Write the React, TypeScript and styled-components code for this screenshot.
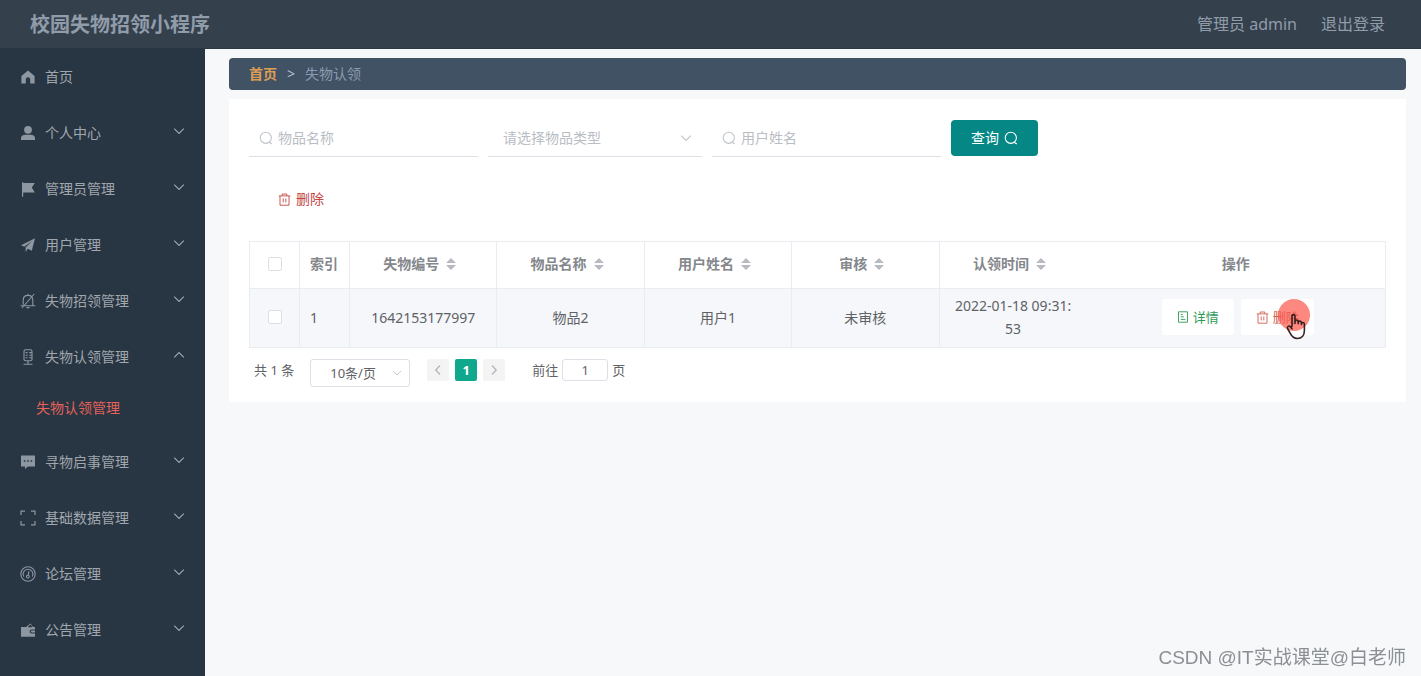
import React from 'react';
import styled, { createGlobalStyle, css } from 'styled-components';

const GlobalStyle = createGlobalStyle`
  *, *::before, *::after { box-sizing: border-box; }
  body {
    margin: 0;
    background: #f6f8fa;
    color: #606266;
    font-family: "Noto Sans", "Noto Sans CJK SC", sans-serif;
    font-size: 14px;
    line-height: 20px;
  }
  button, input, select { font: inherit; color: inherit; margin: 0; }
  a { color: inherit; text-decoration: none; }
`;

const Page = styled.div`
  display: flex;
  flex-direction: column;
  min-height: 100vh;
`;

const Header = styled.header`
  display: flex;
  align-items: center;
  justify-content: space-between;
  height: 49px;
  padding: 0 36px 0 30px;
  background: #35404d;
  border-bottom: 1px solid #2d3743;
  color: #909ca9;
`;

const Title = styled.h1`
  margin: 0;
  padding-top: 2px;
  font-size: 20px;
  line-height: 28px;
  font-weight: 700;
`;

const Account = styled.div`
  display: flex;
  gap: 24px;
  font-size: 16px;
  line-height: 24px;
`;

const Body = styled.div`
  display: flex;
  flex: 1;
`;

const Sidebar = styled.nav`
  flex: 0 0 205px;
  background: #283542;
  color: #a0a7ae;
`;

const MenuList = styled.ul`
  margin: 0;
  padding: 0;
  list-style: none;
`;

const MenuLink = styled.a`
  display: flex;
  align-items: center;
  gap: 9px;
  height: 56px;
  padding: 0 20px;
`;

const MenuIcon = styled.svg`
  flex: none;
  width: 16px;
  height: 16px;
  color: #8d97a2;
`;

const MenuLabel = styled.span`
  flex: 1;
`;

const MenuArrow = styled.svg<{ $open?: boolean }>`
  width: 12px;
  height: 12px;
  margin-bottom: 4px;
  ${(p) => p.$open && css`transform: rotate(180deg);`}
`;

const SubLink = styled.a`
  display: flex;
  align-items: center;
  height: 49px;
  padding: 0 36px 4px;
  color: #e4625a;
`;

const Main = styled.main`
  flex: 1;
  min-width: 0;
  padding: 9px 15px 20px 24px;
`;

const Breadcrumb = styled.nav`
  display: flex;
  align-items: center;
  gap: 10px;
  height: 32px;
  padding: 0 20px;
  border-radius: 4px;
  background: #425265;
  color: #8b9bb0;
`;

const HomeCrumb = styled.a`
  color: #dd9f55;
  font-weight: 700;
`;

const Separator = styled.span`
  color: #b4bfcb;
`;

const Card = styled.section`
  margin-top: 9px;
  padding: 21px 20px 15px;
  background: #fff;
`;

const SearchForm = styled.form`
  display: flex;
  gap: 10px;
`;

const Field = styled.label<{ $width: number }>`
  display: flex;
  align-items: center;
  gap: 5px;
  width: ${(p) => p.$width}px;
  height: 37px;
  padding: 0 10px;
  border-bottom: 1px solid #dcdfe6;
  color: #c0c4cc;
`;

const TextInput = styled.input`
  flex: 1;
  min-width: 0;
  padding: 0;
  border: 0;
  outline: 0;
  background: none;
  color: #606266;
  &::placeholder { color: #b9bdc4; opacity: 1; }
`;

const TypeSelect = styled.select`
  flex: 1;
  min-width: 0;
  padding: 0 0 0 5px;
  border: 0;
  outline: 0;
  appearance: none;
  background: none;
  color: #b9bdc4;
`;

const Glyph = styled.svg<{ $size: number }>`
  flex: none;
  width: ${(p) => p.$size}px;
  height: ${(p) => p.$size}px;
`;

const QueryButton = styled.button`
  display: flex;
  align-items: center;
  gap: 5px;
  height: 36px;
  padding: 0 20px;
  border: 0;
  border-radius: 4px;
  background: #048785;
  color: #fff;
`;

const Toolbar = styled.div`
  display: flex;
  padding: 24px 9px;
`;

const DeleteButton = styled.button`
  display: flex;
  align-items: center;
  gap: 5px;
  height: 36px;
  padding: 0 20px;
  border: 0;
  background: #fff;
  color: #c4453f;
`;

const Table = styled.table`
  width: 100%;
  table-layout: fixed;
  border-collapse: collapse;
  border: 1px solid #e9ecf1;
`;

const cell = css<{ $align?: string; $plain?: boolean }>`
  padding: 0 ${(p) => (p.$align ? 10 : 12)}px 2px;
  text-align: ${(p) => p.$align ?? 'center'};
  border: 0 solid #e9ecf1;
  border-right-width: ${(p) => (p.$plain ? 0 : 1)}px;
  border-bottom-width: 1px;
`;

const Th = styled.th<{ $align?: string; $plain?: boolean }>`
  ${cell}
  height: 47px;
  color: #84878c;
  font-weight: 700;
`;

const Td = styled.td<{ $align?: string; $plain?: boolean }>`
  ${cell}
  height: 59px;
  line-height: 23px;
  background: #f5f7fa;
  word-break: break-all;
`;

const Col = styled.col<{ $width?: number }>`
  width: ${(p) => (p.$width ? `${p.$width}px` : 'auto')};
`;

const SortHead = styled.span`
  display: inline-flex;
  align-items: center;
`;

const SortIcon = styled.svg`
  width: 24px;
  height: 14px;
  color: #b7bac0;
`;

const Check = styled.input`
  display: block;
  width: 14px;
  height: 14px;
  margin: 0 auto;
  appearance: none;
  border: 1px solid #dcdfe6;
  border-radius: 2px;
  background: #fff;
`;

const Actions = styled.div`
  display: flex;
  justify-content: center;
  gap: 7px;
  padding-left: 4px;
`;

const ActionButton = styled.button<{ $color: string }>`
  position: relative;
  display: flex;
  align-items: center;
  gap: 4px;
  height: 36px;
  padding: 0 15px;
  border: 0;
  border-radius: 2px;
  background: #fff;
  color: ${(p) => p.$color};
  font-size: 13px;
`;

const Pointer = styled.svg`
  position: absolute;
  top: -1px;
  right: 2px;
  width: 36px;
  height: 44px;
`;

const Pagination = styled.div`
  display: flex;
  align-items: flex-start;
  padding: 11px 5px 0;
  font-size: 13px;
  line-height: 22px;
`;

const SizeBox = styled.label`
  display: flex;
  align-items: center;
  width: 100px;
  height: 28px;
  margin: 0 17px 0 16px;
  padding: 0 7px 0 19px;
  border: 1px solid #dcdfe6;
  border-radius: 3px;
  color: #c0c4cc;
`;

const SizeSelect = styled.select`
  flex: 1;
  min-width: 0;
  padding: 0;
  border: 0;
  outline: 0;
  appearance: none;
  background: none;
  color: #606266;
`;

const Pager = styled.div`
  display: flex;
  gap: 6px;
`;

const PageButton = styled.button<{ $active?: boolean }>`
  display: flex;
  align-items: center;
  justify-content: center;
  width: 22px;
  height: 22px;
  padding: 0;
  border: 0;
  border-radius: 2px;
  background: ${(p) => (p.$active ? '#0fa88c' : '#f4f4f5')};
  color: ${(p) => (p.$active ? '#fff' : '#b4b7bd')};
  font-weight: 700;
`;

const Jump = styled.label`
  display: flex;
  gap: 4px;
  margin-left: 27px;
`;

const JumpInput = styled.input`
  width: 46px;
  height: 22px;
  padding: 0;
  border: 1px solid #dcdfe6;
  border-radius: 3px;
  text-align: center;
`;

const Watermark = styled.div`
  position: fixed;
  right: 15px;
  bottom: 4px;
  color: #8c8f93;
  font-family: "Liberation Sans", "Noto Sans CJK SC", sans-serif;
  font-size: 19px;
  line-height: 28px;
`;

const Search = ({ size }: { size: number }) => (
  <Glyph $size={size} viewBox="0 0 14 14" fill="none" stroke="currentColor" strokeWidth="1.1" aria-hidden>
    <circle cx="6.8" cy="6.8" r="5.6" />
    <path d="M10.2 11.2 12.8 13" />
  </Glyph>
);

const Trash = () => (
  <Glyph $size={13} viewBox="0 0 13 13" fill="none" stroke="currentColor" strokeWidth=".9" aria-hidden>
    <path d="M.8 2.9h11.4M4.2 2.8V1h4.6v1.8M2 3v9.2h9V3M5.2 5.4v4M7.8 5.4v4" />
  </Glyph>
);

const Doc = () => (
  <Glyph $size={12} viewBox="0 0 12 12" fill="none" stroke="currentColor" strokeWidth=".9" aria-hidden>
    <path d="M1.5.8h9v10.4h-9zM3.8 3.6h2M3.8 5.8h3M3.8 8.4h4.6" />
  </Glyph>
);

const ChevronPath = () => (
  <path d="m1.200 3.600 4.800 4.800 4.800-4.800" fill="none" stroke="currentColor" strokeWidth="1.100" />
);

const icons: Record<string, React.ReactNode> = {
  home: <path fill="currentColor" d="M8 1.6 1.4 7v7.6h4.4V10.400a2.200 2.200 0 0 1 4.400 0v4.200h4.400V7z" />,
  user: (
    <g fill="currentColor">
      <circle cx="8" cy="4.800" r="3.900" />
      <path d="M1 15v-1.800C1 11 2.800 9.800 5 9.800h6c2.200 0 4 1.200 4 3.400V15z" />
    </g>
  ),
  flag: <path fill="currentColor" d="M2 1.200h1.200v.8h11.600l-3 4.600 3 4.800H3.200v4.400H2z" />,
  plane: <path fill="currentColor" d="M15 1.200 1 8.200l3.300 1.500L12 4 5.600 10.400V15l2.200-3.200 4 1.900z" />,
  bell: (
    <g fill="none" stroke="currentColor" strokeWidth="1.100">
      <path d="M3.200 11.800V7.200C3.200 4.400 5.200 2.400 8 2.400s4.800 2 4.800 4.800v5.200M.6 12.700h14.800M8 .8v1.600M6.500 14.600h3M14.200 1 2 15" />
    </g>
  ),
  mic: (
    <g fill="none" stroke="currentColor" strokeWidth="1.100">
      <rect x="4" y=".8" width="8" height="11" rx="1.600" />
      <path d="M8 11.800v3.400M3.600 15.300h8.800M5.600 3.600h2M5.600 6.200h2M5.600 8.800h2M9.200 3.600H12M9.200 6.200H12M9.200 8.800H12" />
    </g>
  ),
  chat: (
    <>
      <path fill="currentColor" d="M1 1.600h14v10.800H7.800L5 15v-2.600H1z" />
      <path stroke="#283542" strokeWidth="1.600" d="M3.800 7h1.600M7.200 7h1.600M10.600 7h1.600" />
    </>
  ),
  frame: (
    <path fill="none" stroke="currentColor" strokeWidth="1.200" d="M5 1.200H1V5M11 1.200h4V5M1 11v3.800h4M15 11v3.800h-4" />
  ),
  gauge: (
    <g fill="none" stroke="currentColor" strokeWidth="1.100">
      <circle cx="8" cy="8" r="7.200" />
      <path d="M3.600 10.600a5 5 0 1 1 8.800 0M9 5.200l-.8 4" />
      <circle cx="7.800" cy="10.600" r="1.400" />
    </g>
  ),
  wallet: (
    <>
      <path fill="currentColor" d="M1 5h5l4.600-3.600L13 5h2v2.600h-3.400a2 2 0 0 0 0 4H15v3.200H1z" />
      <path fill="currentColor" d="M11.800 8.600H15v2h-3.200a1 1 0 0 1 0-2z" />
      <path stroke="#283542" strokeWidth=".8" d="M8.400 4.800 10.600 3l1.200 1.800z" />
    </>
  ),
};

const menu = [
  { icon: 'home', label: '首页', leaf: true },
  { icon: 'user', label: '个人中心' },
  { icon: 'flag', label: '管理员管理' },
  { icon: 'plane', label: '用户管理' },
  { icon: 'bell', label: '失物招领管理' },
  { icon: 'mic', label: '失物认领管理', child: '失物认领管理' },
  { icon: 'chat', label: '寻物启事管理' },
  { icon: 'frame', label: '基础数据管理' },
  { icon: 'gauge', label: '论坛管理' },
  { icon: 'wallet', label: '公告管理' },
];

const sortable = ['失物编号', '物品名称', '用户姓名', '审核', '认领时间'];
const record = ['1642153177997', '物品2', '用户1', '未审核', '2022-01-18 09:31:53'];

export default function App() {
  return (
    <Page>
      <GlobalStyle />
      <Header>
        <Title>校园失物招领小程序</Title>
        <Account>
          <span>管理员 admin</span>
          <a href="#logout">退出登录</a>
        </Account>
      </Header>
      <Body>
        <Sidebar>
          <MenuList>
            {menu.map((item) => (
              <li key={item.label}>
                <MenuLink href="#menu">
                  <MenuIcon viewBox="0 0 16 16" aria-hidden>{icons[item.icon]}</MenuIcon>
                  <MenuLabel>{item.label}</MenuLabel>
                  {!item.leaf && (
                    <MenuArrow $open={!!item.child} viewBox="0 0 12 12" aria-hidden>
                      <ChevronPath />
                    </MenuArrow>
                  )}
                </MenuLink>
                {item.child && <SubLink href="#claims">{item.child}</SubLink>}
              </li>
            ))}
          </MenuList>
        </Sidebar>
        <Main>
          <Breadcrumb>
            <HomeCrumb href="#home">首页</HomeCrumb>
            <Separator>&gt;</Separator>
            <span>失物认领</span>
          </Breadcrumb>
          <Card>
            <SearchForm onSubmit={(e) => e.preventDefault()}>
              <Field $width={229}>
                <Search size={14} />
                <TextInput placeholder="物品名称" aria-label="物品名称" />
              </Field>
              <Field $width={214}>
                <TypeSelect aria-label="物品类型">
                  <option>请选择物品类型</option>
                </TypeSelect>
                <Glyph $size={12} viewBox="0 0 12 12" aria-hidden><ChevronPath /></Glyph>
              </Field>
              <Field $width={229}>
                <Search size={14} />
                <TextInput placeholder="用户姓名" aria-label="用户姓名" />
              </Field>
              <QueryButton type="submit">
                查询
                <Search size={14} />
              </QueryButton>
            </SearchForm>
            <Toolbar>
              <DeleteButton type="button">
                <Trash />
                删除
              </DeleteButton>
            </Toolbar>
            <Table>
              <colgroup>
                <Col $width={50} />
                <Col $width={50} />
                {sortable.map((s) => <Col key={s} />)}
                <Col $width={299} />
              </colgroup>
              <thead>
                <tr>
                  <Th><Check type="checkbox" aria-label="全选" /></Th>
                  <Th $align="left">索引</Th>
                  {sortable.map((s, i) => (
                    <Th key={s} $plain={i === 4}>
                      <SortHead>
                        {s}
                        <SortIcon viewBox="0 0 24 14" aria-hidden>
                          <path fill="currentColor" d="M7 6 12 1l5 5zM7 8h10l-5 5z" />
                        </SortIcon>
                      </SortHead>
                    </Th>
                  ))}
                  <Th>操作</Th>
                </tr>
              </thead>
              <tbody>
                <tr>
                  <Td><Check type="checkbox" aria-label="选择第1行" /></Td>
                  <Td $align="left">1</Td>
                  {record.map((r, i) => <Td key={r} $plain={i === 4}>{r}</Td>)}
                  <Td>
                    <Actions>
                      <ActionButton type="button" $color="#2f9a58">
                        <Doc />
                        详情
                      </ActionButton>
                      <ActionButton type="button" $color="#d0604f">
                        <Trash />
                        删除
                        <Pointer viewBox="0 0 36 44" aria-hidden>
                          <circle cx="18" cy="17" r="16" fill="#fb5a4e" fillOpacity=".72" />
                          <g fill="none" stroke="#33201f" strokeWidth="1.600" strokeLinejoin="round" strokeLinecap="round">
                            <path d="M16 28.500V18.400c0-2.400 3-2.400 3 0v7M19 23.500c0-2 3.200-2 3.200 0v2.300M22.200 24.500c0-2 3.200-1.800 3.200.2v1.800M25.400 25.800c0-1.800 3-1.600 3 .4v6.300c0 4.500-2.400 8-7.200 8-3.700 0-5.200-1.800-6.800-4.800l-2.900-5.200c-.9-1.800 1.600-3.400 2.900-1.700l1.600 2" />
                          </g>
                        </Pointer>
                      </ActionButton>
                    </Actions>
                  </Td>
                </tr>
              </tbody>
            </Table>
            <Pagination>
              <span>共 1 条</span>
              <SizeBox>
                <SizeSelect aria-label="每页条数">
                  <option>10条/页</option>
                </SizeSelect>
                <Glyph $size={10} viewBox="0 0 12 12" aria-hidden><ChevronPath /></Glyph>
              </SizeBox>
              <Pager>
                <PageButton type="button" aria-label="上一页">
                  <Glyph $size={12} viewBox="0 0 12 12" fill="none" stroke="currentColor" strokeWidth="1.400" aria-hidden>
                    <path d="M8 1.500 3.800 6 8 10.500" />
                  </Glyph>
                </PageButton>
                <PageButton type="button" $active>1</PageButton>
                <PageButton type="button" aria-label="下一页">
                  <Glyph $size={12} viewBox="0 0 12 12" fill="none" stroke="currentColor" strokeWidth="1.400" aria-hidden>
                    <path d="M4 1.500 8.200 6 4 10.500" />
                  </Glyph>
                </PageButton>
              </Pager>
              <Jump>
                前往
                <JumpInput defaultValue="1" />
                页
              </Jump>
            </Pagination>
          </Card>
        </Main>
      </Body>
      <Watermark>CSDN @IT实战课堂@白老师</Watermark>
    </Page>
  );
}
